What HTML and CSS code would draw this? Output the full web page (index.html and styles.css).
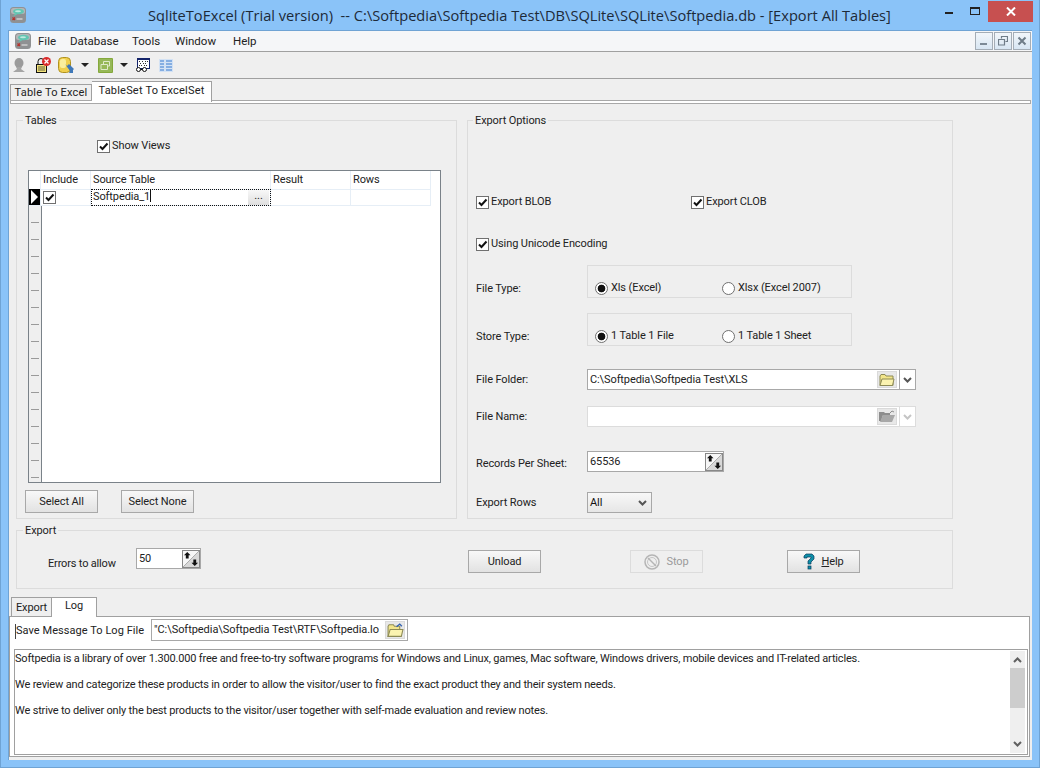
FILE: index.html
```html
<!DOCTYPE html>
<html lang="en">
<head>
<meta charset="utf-8">
<title>SqliteToExcel</title>
<link rel="stylesheet" href="styles.css">
</head>
<body>
<svg class="defs" width="0" height="0" aria-hidden="true">
  <symbol id="app" viewBox="0 0 16 16">
    <rect x="0" y="0" width="16" height="16" rx="3.500" fill="#8f9193"/>
    <rect x="1" y="1" width="14" height="6" rx="2.500" fill="#b4b6b8"/>
    <ellipse cx="8.500" cy="4.500" rx="5.500" ry="2.800" fill="#62c6b2"/>
    <ellipse cx="8" cy="4.200" rx="3" ry="1" fill="#bfe9df"/>
    <path d="M5 6.500l-1.500 2.500 4-1.500z" fill="#62c6b2"/>
    <path d="M2.500 10.500l2.500 2.500M5 10.500l-2.500 2.500" stroke="#b8322c" stroke-width="1.200"/>
    <path d="M6.500 12h6" stroke="#cfcfcf" stroke-width="1.500"/>
  </symbol>
  <symbol id="spin" viewBox="0 0 17 17">
    <rect width="17" height="17" fill="#d8d8d8"/>
    <path d="M0 0h17L0 17z" fill="#f6f6f6"/>
    <path d="M17 0L0 17" stroke="#a8a8a8"/>
    <path d="M4.500 1L8 4.500H6V8H3V4.500H1z" fill="#111"/>
    <path d="M12.500 16L9 12.500h2V9h3v3.500h2z" fill="#111"/>
  </symbol>
  <symbol id="chev" viewBox="0 0 9 6">
    <path d="M1 1l3.500 3.500L8 1" fill="none" stroke="currentColor" stroke-width="2"/>
  </symbol>
  <symbol id="chk" viewBox="0 0 11 11">
    <path d="M2 5.500l2.500 2.500L9.500 2.500" fill="none" stroke="#111" stroke-width="2"/>
  </symbol>
  <symbol id="folder" viewBox="0 0 16 14">
    <path d="M1 3l1-1.500h4L7 3h7v9.500H1z" fill="#f2e58a" stroke="#8d8a55"/>
    <path d="M1 12.500L3 6h12l-1.500 6.500z" fill="#fbf3b0" stroke="#8d8a55"/>
  </symbol>
</svg>

<div class="window">
  <header class="titlebar">
    <svg class="title-icon"><use href="#app"/></svg>
    <div class="title-text">SqliteToExcel (Trial version)  -- C:\Softpedia\Softpedia Test\DB\SQLite\SQLite\Softpedia.db - [Export All Tables]</div>
    <div class="caption">
      <span class="cap-btn"><i class="cap-min"></i></span>
      <span class="cap-btn"><i class="cap-max"></i></span>
      <span class="cap-btn cap-close">
        <svg width="10" height="9" viewBox="0 0 10 9"><path d="M1 .5l8 8M9 .5l-8 8" stroke="#fff" stroke-width="2"/></svg>
      </span>
    </div>
  </header>

  <div class="client">
    <div class="menubar">
      <svg class="menu-icon"><use href="#app"/></svg>
      <span class="menu m-file">File</span>
      <span class="menu m-db">Database</span>
      <span class="menu m-tools">Tools</span>
      <span class="menu m-win">Window</span>
      <span class="menu">Help</span>
      <div class="mdi">
        <span class="mdi-btn"><svg width="10" height="10" viewBox="0 0 10 10"><path d="M1 8h7" stroke="#7d8a96" stroke-width="2"/></svg></span>
        <span class="mdi-btn"><svg width="10" height="10" viewBox="0 0 10 10"><path d="M3.500 2.500V.5h6v5H7.500M.5 3.500h6v5.500h-6z" fill="none" stroke="#6f7c88" stroke-width="1.200"/></svg></span>
        <span class="mdi-btn"><svg width="10" height="10" viewBox="0 0 10 10"><path d="M1.500 1.500l7 7M8.500 1.500l-7 7" stroke="#6f7c88" stroke-width="2"/></svg></span>
      </div>
    </div>

    <div class="toolbar">
      <svg class="tb t-person" width="12" height="14" viewBox="0 0 12 14"><ellipse cx="6" cy="5" rx="4.500" ry="5" fill="#9b9b9b"/><path d="M3 9h6l-1 2 4 3H0l4-3z" fill="#a5a5a5"/></svg>
      <svg class="tb t-lock" width="16" height="16" viewBox="0 0 16 16"><path d="M3 7V4.500a3 3 0 0 1 6 0V7" fill="none" stroke="#111"/><rect x="1.500" y="7.500" width="10" height="8" fill="#f3e27a" stroke="#111"/><rect x="3" y="9" width="7" height="5" fill="#a9a15c"/><circle cx="11.500" cy="4.500" r="4.500" fill="#d92b2b"/><path d="M9.500 2.500l4 4M13.500 2.500l-4 4" stroke="#fff" stroke-width="1.300"/></svg>
      <svg class="tb t-db" width="17" height="16" viewBox="0 0 17 16"><rect x=".5" y=".5" width="12" height="15" rx="4" fill="#f0cf4e" stroke="#b09320"/><rect x="2" y="2" width="6" height="9" rx="2" fill="#fbee9d"/><path d="M7 7l2 2 2-2 5 5-1 1v3h-4l1-2z" fill="#3f78b8"/></svg>
      <svg class="tb t-drop" width="8" height="4" viewBox="0 0 8 4"><path d="M0 0h8L4 4z" fill="#222"/></svg>
      <svg class="tb t-green" width="15" height="15" viewBox="0 0 15 15"><rect width="15" height="15" rx="1" fill="#84a83c"/><rect x="1" y="1" width="13" height="13" fill="#96b857"/><path d="M5.500 6V3.500h6v4.500H9.500M3 6.500h6.500v5H3z" fill="none" stroke="#dfeac8"/></svg>
      <svg class="tb t-drop2" width="8" height="4" viewBox="0 0 8 4"><path d="M0 0h8L4 4z" fill="#222"/></svg>
      <svg class="tb t-report" width="14" height="14" viewBox="0 0 14 14"><rect x="1" y="0" width="13" height="11" fill="#14246a"/><rect x="2" y="2" width="11" height="8" fill="#fff"/><path d="M3 3.500h2M6 3.500h2M9 3.500h3M4 5.500h2M7 5.500h3M3 7.500h3M8 7.500h3" stroke="#333" stroke-dasharray="1 1"/><circle cx="2.500" cy="11.500" r="2" fill="#fff" stroke="#111"/><circle cx="8.500" cy="11.500" r="2" fill="#fff" stroke="#111"/><path d="M4.500 11.500h2" stroke="#111"/></svg>
      <svg class="tb t-grid" width="14" height="13" viewBox="0 0 14 13"><rect width="14" height="13" fill="#d3e2f4"/><path d="M1 2h4M1 5h4M1 8h4M1 11h4M7 2h6M7 5h6M7 8h6M7 11h6" stroke="#6c9ddb" stroke-width="1.500"/></svg>
    </div>

    <div class="tabbar">
      <div class="tab">Table To Excel</div>
      <div class="tab tab-on">TableSet To ExcelSet</div>
      <div class="tab-line"></div>
    </div>

    <div class="page">
      <div class="groups">
        <fieldset class="group g-tables">
          <legend>Tables</legend>
          <label class="check c-views"><span class="box"><svg><use href="#chk"/></svg></span>Show Views</label>
          <div class="grid">
            <div class="grid-head">
              <span></span><span>Include</span><span>Source Table</span><span>Result</span><span>Rows</span>
            </div>
            <div class="grid-row">
              <span class="sel"><i></i></span>
              <span class="grid-chk"><span class="box"><svg><use href="#chk"/></svg></span></span>
              <span class="editor"><span class="ed-text">Softpedia_1</span><span class="ed-btn">...</span></span>
              <span></span><span></span>
            </div>
            <div class="grid-rest"><div class="gutter"></div></div>
          </div>
          <div class="btn-row">
            <button class="btn">Select All</button>
            <button class="btn b-none">Select None</button>
          </div>
        </fieldset>

        <fieldset class="group g-options">
          <legend>Export Options</legend>
          <div class="opt-checks">
            <label class="check c-blob"><span class="box"><svg><use href="#chk"/></svg></span>Export BLOB</label>
            <label class="check"><span class="box"><svg><use href="#chk"/></svg></span>Export CLOB</label>
          </div>
          <label class="check c-uni"><span class="box"><svg><use href="#chk"/></svg></span>Using Unicode Encoding</label>

          <div class="frow r-type">
            <span class="lbl lbl-low">File Type:</span>
            <div class="radios">
              <span class="radio r-one"><i class="dot on"></i>Xls (Excel)</span>
              <span class="radio"><i class="dot"></i>Xlsx (Excel 2007)</span>
            </div>
          </div>
          <div class="frow r-store">
            <span class="lbl lbl-low">Store Type:</span>
            <div class="radios">
              <span class="radio r-one"><i class="dot on"></i>1 Table 1 File</span>
              <span class="radio"><i class="dot"></i>1 Table 1 Sheet</span>
            </div>
          </div>
          <div class="frow r-folder">
            <span class="lbl">File Folder:</span>
            <div class="input i-path">
              <span class="val">C:\Softpedia\Softpedia Test\XLS</span>
              <span class="ico-btn"><svg width="16" height="14"><use href="#folder"/></svg></span>
              <span class="drop"><svg width="9" height="6"><use href="#chev"/></svg></span>
            </div>
          </div>
          <div class="frow r-name">
            <span class="lbl">File Name:</span>
            <div class="input i-path i-off">
              <span class="val"></span>
              <span class="ico-btn ico-gray"><svg width="16" height="13" viewBox="0 0 16 13"><path d="M0 2h5l1 1h5v2H4L2 11H0z" fill="#8d8d8d"/><path d="M4 5h12l-3 7H1z" fill="#a8a8a8"/><path d="M11 3l2-2 2 1" fill="none" stroke="#8d8d8d"/></svg></span>
              <span class="drop"><svg width="9" height="6"><use href="#chev"/></svg></span>
            </div>
          </div>
          <div class="frow r-rec">
            <span class="lbl lbl-rec">Records Per Sheet:</span>
            <div class="input i-rec"><span class="val">65536</span><svg class="spin"><use href="#spin"/></svg></div>
          </div>
          <div class="frow r-rows">
            <span class="lbl">Export Rows</span>
            <div class="select"><span class="val">All</span><svg width="9" height="6"><use href="#chev"/></svg></div>
          </div>
        </fieldset>
      </div>

      <fieldset class="group g-export">
        <legend>Export</legend>
        <div class="export-row">
          <span class="err-lbl">Errors to allow</span>
          <div class="input i-err"><span class="val">50</span><svg class="spin"><use href="#spin"/></svg></div>
          <button class="btn b-unload">Unload</button>
          <button class="btn b-stop" disabled>
            <svg width="16" height="16" viewBox="0 0 16 16"><circle cx="8" cy="8" r="7" fill="none" stroke="#b5b5b5" stroke-width="1.500"/><circle cx="8" cy="8" r="4.500" fill="none" stroke="#c5c5c5"/><path d="M4 4l8 8" stroke="#b5b5b5" stroke-width="1.500"/></svg>
            Stop
          </button>
          <button class="btn b-help">
            <svg width="12" height="17" viewBox="0 0 12 17"><path d="M1 5V3l2-2h6l2 2v3L8 9v2H5V8l3-3V4H4v1z" fill="#0e8fa8" stroke="#083a5c" stroke-width=".7"/><rect x="5" y="13" width="3" height="3" fill="#0e8fa8" stroke="#083a5c" stroke-width=".7"/></svg>
            <span><u>H</u>elp</span>
          </button>
        </div>
      </fieldset>
    </div>

    <div class="logtabs">
      <div class="ltab">Export</div>
      <div class="ltab ltab-on">Log</div>
    </div>
    <div class="logpanel">
      <div class="logbar">
        <span class="log-lbl">Save Message To Log File</span>
        <div class="input i-log">
          <span class="val">"C:\Softpedia\Softpedia Test\RTF\Softpedia.lo</span>
          <span class="ico-btn ico-log"><svg width="17" height="15" viewBox="0 0 16 14"><path d="M1 3l1-1.500h4L7 3h5v9.500H1z" fill="#f2e58a" stroke="#8d8a55"/><path d="M1 12.500L3 6h12l-1.500 6.500z" fill="#fbf3b0" stroke="#8d8a55"/><path d="M9 3.500l3-2.500 2 2" fill="none" stroke="#2f5fb0" stroke-width="1.200"/></svg></span>
        </div>
      </div>
      <div class="memo">
        <div class="memo-text">
          <p>Softpedia is a library of over 1.300.000 free and free-to-try software programs for Windows and Linux, games, Mac software, Windows drivers, mobile devices and IT-related articles.</p>
          <p>We review and categorize these products in order to allow the visitor/user to find the exact product they and their system needs.</p>
          <p>We strive to deliver only the best products to the visitor/user together with self-made evaluation and review notes.</p>
        </div>
        <div class="scroll">
          <svg class="s-up" width="9" height="6" viewBox="0 0 9 6"><path d="M1 5l3.500-3.500L8 5" fill="none" stroke="#606060" stroke-width="2"/></svg>
          <div class="thumb"></div>
          <svg class="s-down" width="9" height="6"><use href="#chev"/></svg>
        </div>
      </div>
    </div>
  </div>
</div>
</body>
</html>
```

FILE: styles.css
```css
* { box-sizing: border-box; }
html, body { margin: 0; padding: 0; height: 100%; overflow: hidden; }
body { font: 11px/14px Roboto, "Liberation Sans", Arial, sans-serif; letter-spacing: -0.1px; color: #222; }
.defs { position: absolute; }

.window { width: 1040px; height: 768px; background: #8ac3f8; border: 1px solid #6fa3d4; border-top: 0; display: flex; flex-direction: column; }

.titlebar { height: 30px; flex: none; display: flex; position: relative; }
.title-icon { width: 16px; height: 16px; margin: 7px 0 0 9px; }
.title-text { position: absolute; left: 147px; top: 5px; font: 14.63px/20px "Open Sans", sans-serif; letter-spacing: 0; white-space: pre; color: #1d2a38; }
.caption { margin-left: auto; display: flex; height: 21px; margin-top: 1px; margin-right: 6px; }
.cap-btn { width: 26px; display: flex; align-items: center; justify-content: center; }
.cap-close { width: 45px; background: #c75050; }
.cap-min { width: 8px; height: 2px; background: #222; margin-top: 3px; }
.cap-max { width: 10px; height: 8px; border: 1px solid #222; border-top-width: 2px; margin-top: -2px; }

.client { margin: 0 7px; height: 730px; background: #efefef; border: 1px solid #6fa3d4; border-width: 1px 0 0 1px; display: flex; flex-direction: column; }

.menubar { height: 21px; flex: none; background: #f5f6f8; border-bottom: 1px solid #a0a0a0; display: flex; align-items: center; }
.menu-icon { width: 16px; height: 16px; margin-left: 6px; margin-right: 7px; }
.menu { font-size: 11.5px; letter-spacing: 0; }
.m-file { width: 32px; }
.m-db { width: 62px; }
.m-tools { width: 43px; }
.m-win { width: 58px; }
.mdi { margin-left: auto; display: flex; gap: 1px; margin-right: 1px; }
.mdi-btn { width: 18px; height: 18px; border: 1px solid #a4adb6; background: linear-gradient(#f2f6fa, #d8e6f3); display: flex; align-items: center; justify-content: center; }

.toolbar { height: 27px; flex: none; border-bottom: 1px solid #a0a0a0; display: flex; align-items: center; position: relative; }
.tb { flex: none; }
.t-person { margin-left: 4px; }
.t-lock { margin-left: 10px; }
.t-db { margin-left: 7px; }
.t-drop { margin-left: 6px; }
.t-green { margin-left: 9px; }
.t-drop2 { margin-left: 7px; }
.t-report { margin-left: 8px; }
.t-grid { margin-left: 9px; }

.tabbar { height: 22px; flex: none; display: flex; align-items: flex-end; padding-left: 1px; margin-top: 1px; position: relative; }
.tab { height: 18px; width: 82px; background: #efefef; border: 1px solid #a0a0a0; border-bottom: 0; text-align: center; line-height: 15px; white-space: nowrap; letter-spacing: 0.2px; }
.tab-on { height: 21px; width: 120px; background: #fff; line-height: 17px; border-left: 0; position: relative; z-index: 1; }
.tab-line { position: absolute; left: 1px; right: 1px; top: 20px; height: 4px; border: 1px solid #a8a8a8; background: #fff; }

.page { flex: 1; padding: 11px 0 0 7px; display: flex; flex-direction: column; min-height: 0; }
.groups { display: flex; gap: 10px; }
.group { margin: 0; padding: 0; border: 1px solid #dcdcdc; min-width: 0; }
.group legend { margin-left: 6px; padding: 0 2px; line-height: 14px; position: relative; top: 1px; }
.g-tables { width: 441px; height: 406px; padding: 0 0 0 9px; }
.g-tables legend { margin-left: -3px; }
.g-options { width: 486px; height: 406px; padding: 0 0 0 8px; }
.g-options legend { margin-left: -3px; }

.check { display: flex; align-items: center; gap: 2px; height: 14px; white-space: nowrap; }
.box { width: 13px; height: 13px; flex: none; border: 1px solid #707070; background: #fff; display: flex; }
.box svg { width: 11px; height: 11px; }
.c-views { margin: 12px 0 0 71px; }

.grid { margin: 17px 0 0 2px; width: 413px; height: 313px; border: 1px solid #7a8289; background: #fff; display: flex; flex-direction: column; }
.grid-head, .grid-row { display: grid; grid-template-columns: 12px 50px 180px 80px 80px; flex: none; }
.grid-head { height: 18px; line-height: 18px; }
.grid-head span { border-right: 1px solid #e6eef6; padding-left: 2px; border-bottom: 1px solid #e6eef6; }
.grid-head span:first-child { padding: 0; }
.grid-row { height: 17px; }
.grid-row > span { border-right: 1px solid #e6eef6; border-bottom: 1px solid #e6eef6; }
.sel { background: #000; display: flex; align-items: center; justify-content: center; }
.sel i { width: 0; height: 0; border-left: 7px solid #fff; border-top: 7px solid transparent; border-bottom: 7px solid transparent; }
.grid-chk { padding: 2px 0 0 2px; }
.editor { display: flex; outline: 1px dotted #111; outline-offset: -1px; line-height: 16px; align-items: center; }
.ed-text { flex: 1; padding-left: 2px; }
.ed-text::after { content: ""; display: inline-block; width: 1px; height: 13px; background: #111; vertical-align: -2px; }
.ed-btn { width: 21px; height: 15px; margin-right: 1px; background: linear-gradient(#f8f8f8, #dedede); text-align: center; line-height: 12px; }
.grid-rest { flex: 1; display: flex; }
.gutter { width: 13px; border-right: 1px solid #7a8289; background: #efefef linear-gradient(transparent 0 16px, #9a9a9a 16px 17px) 2px 0 / 8px 17px repeat-y; }

.btn-row { display: flex; gap: 23px; margin: 7px 0 0 -1px; }
.btn { height: 23px; width: 73px; padding: 0; border: 1px solid #a8a8a8; background: linear-gradient(#f8f8f8, #e2e2e2); font: 11px/14px Roboto, "Liberation Sans", Arial, sans-serif; letter-spacing: -0.1px; color: #222; display: flex; align-items: center; justify-content: center; gap: 6px; }

.opt-checks { display: flex; margin-top: 68px; }
.c-blob { width: 215px; }
.c-uni { margin-top: 28px; }
.frow { display: flex; }
.lbl { width: 111px; flex: none; padding-top: 4px; white-space: nowrap; }
.lbl-low { padding-top: 17px; }
.lbl-rec { padding-top: 6px; }
.r-type { margin-top: 14px; height: 33px; }
.r-store { margin-top: 15px; height: 33px; }
.r-folder { margin-top: 23px; height: 21px; }
.r-name { margin-top: 16px; height: 21px; }
.r-rec { margin-top: 24px; height: 21px; }
.r-rows { margin-top: 20px; height: 21px; }
.radios { width: 265px; border: 1px solid #dcdcdc; display: flex; align-items: flex-start; padding: 15px 0 0 7px; }
.radio { display: flex; align-items: center; height: 14px; white-space: nowrap; gap: 3px; }
.r-one { width: 127px; }
.dot { width: 13px; height: 13px; border: 1px solid #707070; border-radius: 50%; background: #fff; display: block; flex: none; }
.dot.on { background: radial-gradient(circle, #111 0 3.500px, #fff 4.200px); }

.input { border: 1px solid #a8a8a8; background: #fff; display: flex; align-items: center; height: 21px; }
.val { padding-left: 2px; flex: 1; white-space: nowrap; overflow: hidden; }
.i-path { width: 329px; }
.i-off { border-color: #dcdcdc; }
.ico-btn { width: 20px; height: 17px; background: #e8e8e8; border: 1px solid #dadada; display: flex; align-items: center; justify-content: center; }
.drop { width: 16px; height: 19px; margin-left: 2px; border-left: 1px solid #a8a8a8; display: flex; align-items: center; justify-content: center; color: #555; }
.i-off .drop { border-color: #dcdcdc; color: #c5c5c5; }
.i-rec { width: 137px; }
.spin { width: 18px; height: 18px; flex: none; margin-right: 0; border: 1px solid #888; }
.select { width: 65px; height: 21px; border: 1px solid #a8a8a8; background: linear-gradient(#f8f8f8, #e6e6e6); display: flex; align-items: center; padding-right: 4px; color: #555; }
.select .val { color: #111; }

.g-export { width: 937px; height: 67px; margin-top: 4px; }
.export-row { display: flex; align-items: flex-start; position: relative; }
.err-lbl { margin: 20px 0 0 31px; width: 88px; letter-spacing: -0.17px; }
.i-err { width: 65px; margin-top: 11px; }
.b-unload { margin: 13px 0 0 267px; }
.b-stop { margin: 13px 0 0 89px; color: #9a9a9a; border-color: #dcdcdc; background: #efefef; }
.b-help { margin: 13px 0 0 84px; }

.logtabs { display: flex; align-items: flex-end; height: 20px; flex: none; padding-left: 2px; margin-top: 7px; }
.ltab { height: 19px; width: 41px; border: 1px solid #a0a0a0; border-bottom: 0; text-align: center; line-height: 20px; }
.ltab-on { height: 20px; width: 45px; background: #fff; border-left: 0; line-height: 16px; position: relative; top: 1px; }

.logpanel { margin: 0 2px 3px 0; height: 141px; flex: none; background: #fff; border: 1px solid #a0a0a0; display: flex; flex-direction: column; }
.logbar { height: 32px; flex: none; display: flex; align-items: flex-start; padding: 2px 0 0 0; }
.log-lbl { margin: 5px 0 0 5px; width: 136px; height: 15px; padding-left: 0; border-left: 1px solid #444; white-space: nowrap; letter-spacing: 0.05px; }
.i-log { width: 257px; height: 22px; letter-spacing: -0.05px; }
.ico-log { margin-right: 2px; height: 18px; }
.memo { flex: 1; margin: 0 1px 1px 4px; border: 1px solid #a0a0a0; display: flex; }
.memo-text { flex: 1; padding: 2px 0 0 0; letter-spacing: -0.17px; }
.memo-text p { margin: 0 0 12px; white-space: nowrap; }
.scroll { width: 15px; margin: 1px 2px 1px 0; background: #efefef; display: flex; flex-direction: column; align-items: center; }
.s-up { margin-top: 6px; }
.thumb { width: 15px; height: 40px; margin-top: 5px; background: #cdcdcd; }
.s-down { margin-top: auto; margin-bottom: 6px; color: #606060; }
```
